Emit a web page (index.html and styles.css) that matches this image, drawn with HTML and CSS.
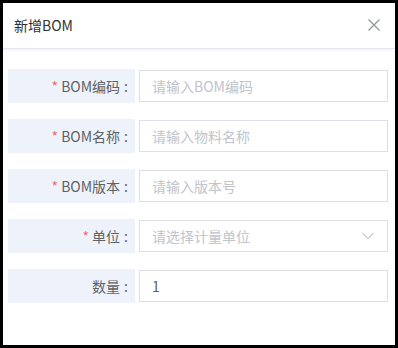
FILE: index.html
```html
<!DOCTYPE html>
<html lang="zh-CN">
<head>
    <meta charset="UTF-8">
    <meta name="viewport" content="width=device-width, initial-scale=1.0">
    <title>新增BOM</title>
    <link rel="stylesheet" href="styles.css">
</head>
<body>
    <div class="dialog">
        <div class="dialog-header">
            <span class="dialog-title">新增BOM</span>
            <svg class="close" width="12" height="12" viewBox="0 0 12 12">
                <path d="M0.5 0.5 L11.5 11.5 M11.5 0.5 L0.5 11.5" stroke="#909399" stroke-width="1.2" fill="none"/>
            </svg>
        </div>
        <div class="form">
            <div class="row">
                <label class="label"><span class="req">*</span> BOM编码<span class="colon">:</span></label>
                <input class="field" type="text" placeholder="请输入BOM编码">
            </div>
            <div class="row">
                <label class="label"><span class="req">*</span> BOM名称<span class="colon">:</span></label>
                <input class="field" type="text" placeholder="请输入物料名称">
            </div>
            <div class="row">
                <label class="label"><span class="req">*</span> BOM版本<span class="colon">:</span></label>
                <input class="field" type="text" placeholder="请输入版本号">
            </div>
            <div class="row">
                <label class="label"><span class="req">*</span> 单位<span class="colon">:</span></label>
                <div class="field select">
                    <span class="placeholder">请选择计量单位</span>
                    <svg width="12" height="8" viewBox="0 0 12 8">
                        <path d="M0.5 0.8 L6 6.8 L11.5 0.8" stroke="#c0c4cc" stroke-width="1.1" fill="none"/>
                    </svg>
                </div>
            </div>
            <div class="row">
                <label class="label">数量<span class="colon">:</span></label>
                <input class="field" type="text" value="1">
            </div>
        </div>
    </div>
</body>
</html>
```

FILE: styles.css
```css
body {
    margin: 0;
    background: #000;
    font-family: "Noto Sans CJK SC", "Liberation Sans", sans-serif;
}
.dialog {
    width: 398px;
    height: 348px;
    box-sizing: border-box;
    border: 3px solid #000;
    background: #fff;
}
.dialog-header {
    height: 46px;
    box-sizing: border-box;
    display: flex;
    align-items: center;
    justify-content: space-between;
    padding: 0 15px 2px 11px;
    border-bottom: 1px solid #e4e7ed;
    box-shadow: 0 1px 4px rgba(0, 0, 0, 0.06);
}
.dialog-title {
    font-size: 14px;
    line-height: 20px;
    color: #303133;
}
.close {
    display: block;
}
.form {
    padding: 20px 7px 0 5px;
}
.row {
    display: flex;
    align-items: center;
    gap: 4px;
    margin-bottom: 16px;
}
.label {
    width: 127px;
    height: 34px;
    flex: none;
    box-sizing: border-box;
    background: #eef3fb;
    padding-right: 7px;
    text-align: right;
    font-size: 14px;
    line-height: 34px;
    color: #606266;
}
.req {
    color: #f56c6c;
}
.colon {
    margin-left: 4px;
}
.field {
    flex: 1;
    height: 32px;
    box-sizing: border-box;
    border: 1px solid #dcdfe6;
    border-radius: 0;
    padding: 0 12px;
    font-family: inherit;
    font-size: 14px;
    color: #606266;
    outline: none;
    margin: 0;
    min-width: 0;
}
.field::placeholder {
    color: #c0c4cc;
}
.select {
    display: flex;
    align-items: center;
    justify-content: space-between;
    padding-right: 13px;
}
.placeholder {
    color: #c0c4cc;
    line-height: 20px;
}
.select svg {
    display: block;
}
```
